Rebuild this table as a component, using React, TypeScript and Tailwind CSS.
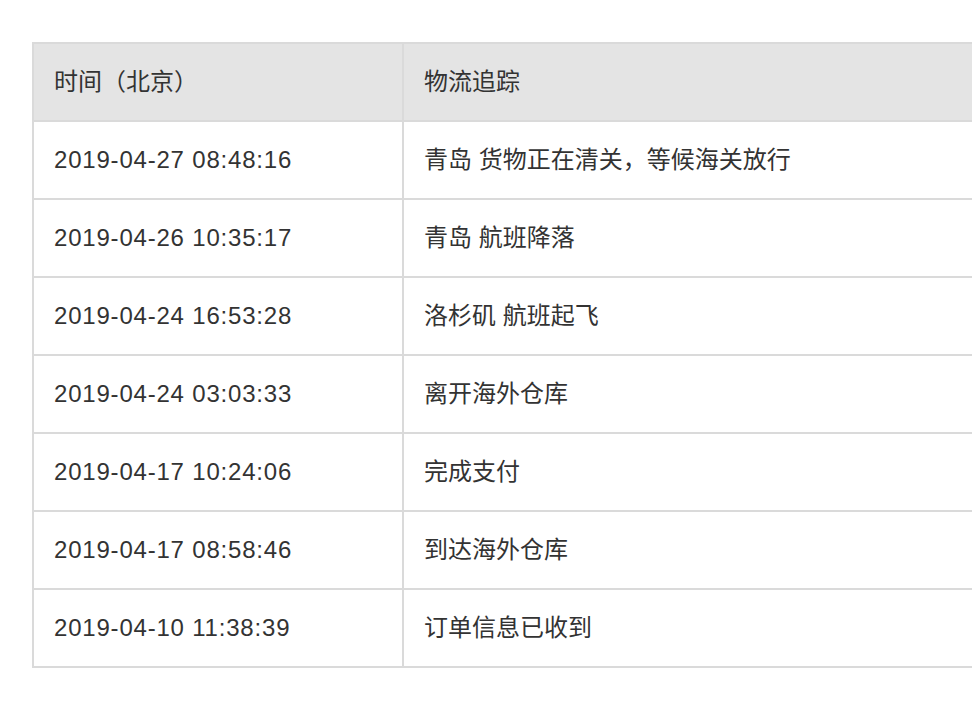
// Logistics tracking table — time (Beijing) and tracking event per row.

const rows: [string, string][] = [
  ['2019-04-27 08:48:16', '青岛 货物正在清关，等候海关放行'],
  ['2019-04-26 10:35:17', '青岛 航班降落'],
  ['2019-04-24 16:53:28', '洛杉矶 航班起飞'],
  ['2019-04-24 03:03:33', '离开海外仓库'],
  ['2019-04-17 10:24:06', '完成支付'],
  ['2019-04-17 08:58:46', '到达海外仓库'],
  ['2019-04-10 11:38:39', '订单信息已收到'],
]

function Row({ time, event, header }: { time: string; event: string; header?: boolean }) {
  return (
    <div
      className={`flex items-center ${header ? 'h-[76px] bg-[#e4e4e4]' : 'h-[78px] border-t-2 border-[#dadada] bg-white'}`}
    >
      <div className={`w-[368px] shrink-0 px-5 ${header ? '' : 'tracking-[0.8px]'}`}>{time}</div>
      <div className="flex h-full flex-1 items-center border-l-2 border-[#dadada] px-5">{event}</div>
    </div>
  )
}

export default function App() {
  return (
    <div
      className="min-h-[720px] overflow-hidden bg-white pl-[32px] pt-[42px] text-[24px] text-[#333]"
      style={{ fontFamily: '"Liberation Sans", "Noto Sans CJK SC", sans-serif' }}
    >
      <div className="w-[1000px] border-2 border-[#dadada]">
        <Row header time="时间（北京）" event="物流追踪" />
        {rows.map(([t, e]) => (
          <Row key={t + e} time={t} event={e} />
        ))}
      </div>
    </div>
  )
}
